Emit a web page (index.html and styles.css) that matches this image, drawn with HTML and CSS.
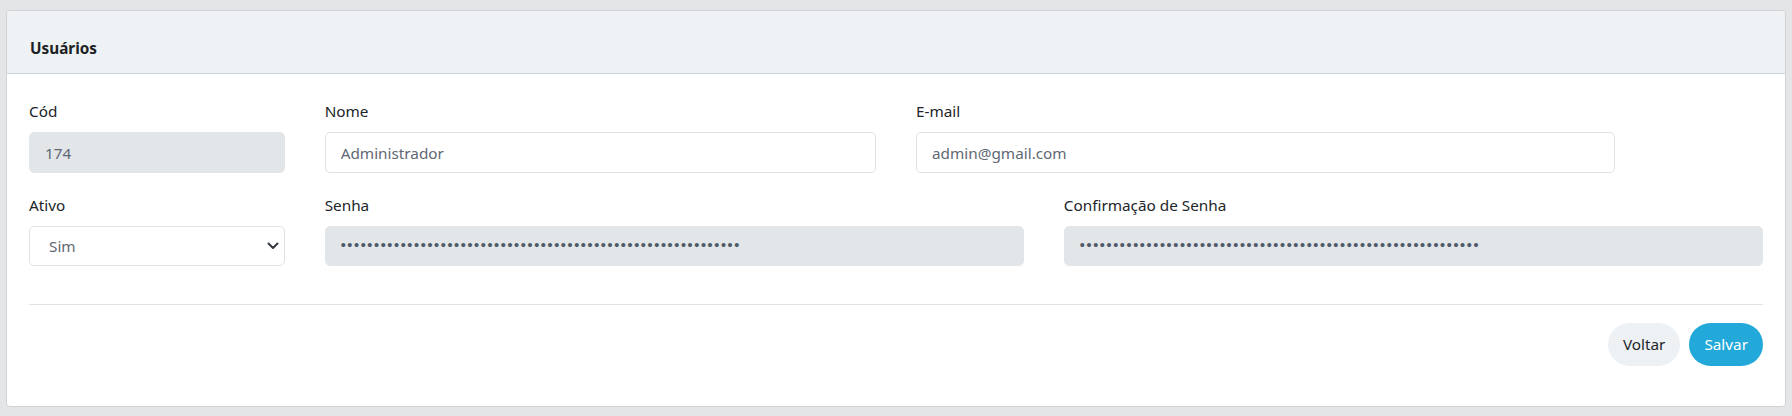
FILE: index.html
```html
<!DOCTYPE html>
<html lang="pt-BR">
<head>
<meta charset="utf-8">
<title>Usuários</title>
<link rel="stylesheet" href="styles.css">
</head>
<body>
<div class="card">
  <div class="card-header">Usuários</div>
  <div class="card-body">
    <div class="form-grid">
      <div class="field span-2">
        <label class="label">Cód</label>
        <input class="control disabled" value="174" readonly>
      </div>
      <div class="field span-4">
        <label class="label">Nome</label>
        <input class="control" value="Administrador">
      </div>
      <div class="field span-5">
        <label class="label">E-mail</label>
        <input class="control" value="admin@gmail.com">
      </div>
      <div class="field row-start">
        <label class="label">Ativo</label>
        <div class="select-wrap">
          <select class="control select">
            <option>Sim</option>
            <option>Não</option>
          </select>
          <svg class="chevron" width="12" height="8" viewBox="0 0 12 8"><path d="M1.5 1.5 L6 6 L10.5 1.5" fill="none" stroke="#343a40" stroke-width="2" stroke-linecap="round" stroke-linejoin="round"/></svg>
        </div>
      </div>
      <div class="field span-5">
        <label class="label">Senha</label>
        <div class="control disabled password"><span class="dots">••••••••••••••••••••••••••••••••••••••••••••••••••••••••••••</span></div>
      </div>
      <div class="field span-5">
        <label class="label">Confirmação de Senha</label>
        <div class="control disabled password"><span class="dots">••••••••••••••••••••••••••••••••••••••••••••••••••••••••••••</span></div>
      </div>
    </div>
    <hr class="divider">
    <div class="actions">
      <button class="btn btn-light">Voltar</button>
      <button class="btn btn-primary">Salvar</button>
    </div>
  </div>
</div>
</body>
</html>
```

FILE: styles.css
```css
* { box-sizing: border-box; }

html, body { height: 100%; }

body {
  margin: 0;
  padding: 10px 6px 9px;
  background: #e4e5e7;
  font-family: "Noto Sans", "Open Sans", sans-serif;
  font-size: 15.3px;
  color: #212529;
}

.card {
  background: #ffffff;
  border: 1px solid #cfd3d8;
  border-radius: 4px;
  overflow: hidden;
}

.card-header {
  background: #eef2f5;
  border-bottom: 1px solid #cfd4d9;
  padding: 25px 23px 13px;
  line-height: 24px;
  font-weight: 700;
  color: #1c1f23;
}

.card-body {
  padding: 25px 23px 40px 23px;
}

.form-grid {
  display: grid;
  grid-template-columns: repeat(12, 1fr);
  column-gap: 40px;
  row-gap: 20px;
  margin: 0 -1px;
}

.span-2 { grid-column: span 2; }
.span-4 { grid-column: span 4; }
.span-5 { grid-column: span 5; }
.row-start { grid-column: 1 / span 2; }

.field {
  display: flex;
  flex-direction: column;
}

.label {
  line-height: 24px;
  margin-bottom: 9px;
  color: #212529;
}

.control {
  display: block;
  width: 100%;
  height: 41px;
  margin: 0;
  padding: 0 15px;
  border: 1px solid #dee2e6;
  border-radius: 5px;
  background: #ffffff;
  font: inherit;
  color: #5f6873;
  outline: none;
}

.control.disabled {
  background: #e3e6e9;
  border-color: #e3e6e9;
}

.select-wrap {
  position: relative;
}

.select {
  appearance: none;
  -webkit-appearance: none;
  padding-left: 19px;
  height: 40px;
}

.chevron {
  position: absolute;
  right: 6px;
  top: 16px;
}

.password {
  display: flex;
  align-items: center;
  height: 40px;
  padding-left: 13px;
}

.dots {
  font-family: "Liberation Mono", monospace;
  font-size: 15px;
  letter-spacing: -2.33px;
  color: #4f5b6b;
  white-space: nowrap;
}

.divider {
  border: 0;
  border-top: 1px solid #dfe2e5;
  margin: 38px -1px 18px;
}

.actions {
  display: flex;
  justify-content: flex-end;
  gap: 9px;
  margin-right: -1px;
}

.btn {
  height: 43px;
  padding: 0 15px;
  border: 0;
  border-radius: 22px;
  font: inherit;
  line-height: 43px;
  cursor: pointer;
}

.btn-light {
  background: #eef1f4;
  color: #212529;
}

.btn-primary {
  background: #22a8d9;
  color: #ffffff;
}
```
